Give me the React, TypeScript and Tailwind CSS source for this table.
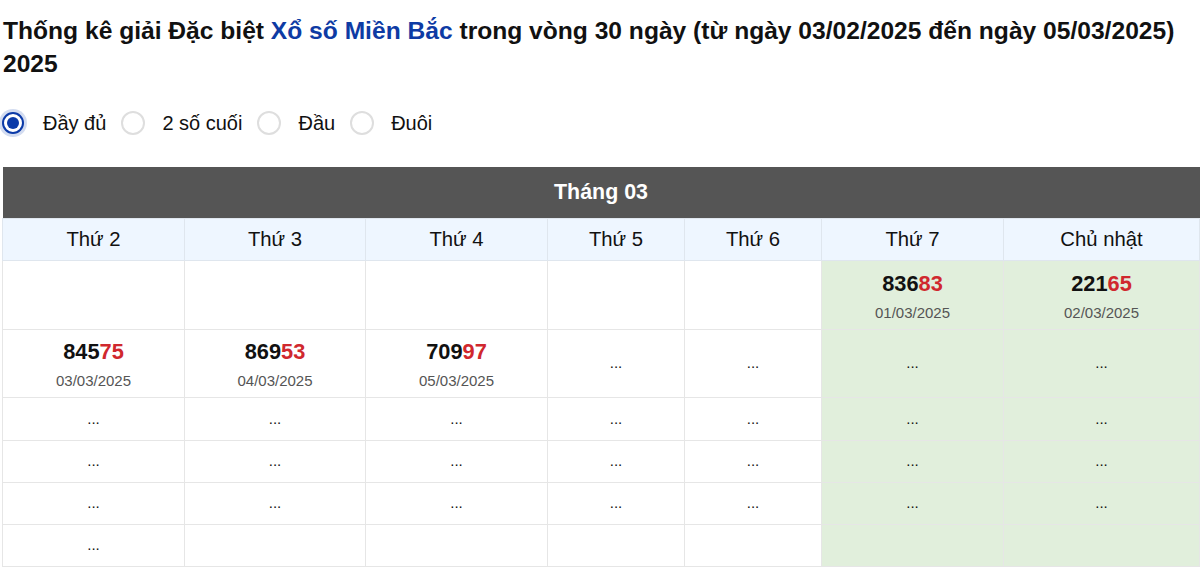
import React from "react";

type Cell = { num?: string; date?: string; dots?: boolean } | null;

const days = ["Thứ 2", "Thứ 3", "Thứ 4", "Thứ 5", "Thứ 6", "Thứ 7", "Chủ nhật"];

const rows: { h: string; cells: Cell[] }[] = [
  {
    h: "h-[69px]",
    cells: [null, null, null, null, null, { num: "83683", date: "01/03/2025" }, { num: "22165", date: "02/03/2025" }],
  },
  {
    h: "h-[68px]",
    cells: [
      { num: "84575", date: "03/03/2025" },
      { num: "86953", date: "04/03/2025" },
      { num: "70997", date: "05/03/2025" },
      { dots: true },
      { dots: true },
      { dots: true },
      { dots: true },
    ],
  },
  { h: "h-[43px]", cells: Array.from({ length: 7 }, () => ({ dots: true })) },
  { h: "h-[42px]", cells: Array.from({ length: 7 }, () => ({ dots: true })) },
  { h: "h-[42px]", cells: Array.from({ length: 7 }, () => ({ dots: true })) },
  { h: "h-[42px]", cells: [{ dots: true }, null, null, null, null, null, null] },
];

function Radio({ checked, label }: { checked?: boolean; label: string }) {
  return (
    <label className="flex items-center">
      {checked ? (
        <span className="flex h-[22px] w-[22px] items-center justify-center rounded-full border-[2px] border-[#0b3aa8] bg-white shadow-[0_0_0_3px_rgba(13,59,171,0.18)]">
          <span className="h-[12px] w-[12px] rounded-full bg-[#0b3aa8]" />
        </span>
      ) : (
        <span className="h-[24px] w-[24px] rounded-full border-[2px] border-[#dedede] bg-white" />
      )}
      <span className={`${checked ? "ml-[19px]" : "ml-[17px]"} text-[20px] leading-[28px] text-[#111]`}>{label}</span>
    </label>
  );
}

export default function App() {
  return (
    <div className="w-[1200px] bg-white pl-[2px] text-black" style={{ fontFamily: '"Liberation Sans", Arial, sans-serif' }}>
      <h1 className="pt-[14px] pl-[1px] pr-[10px] text-[24.6px] font-bold leading-[33px] text-[#111]">
        Thống kê giải Đặc biệt <span className="text-[#0e3ba4]">Xổ số Miền Bắc</span> trong vòng 30 ngày (từ ngày
        03/02/2025 đến ngày 05/03/2025) 2025
      </h1>
      <div className="mt-[29px] flex items-center gap-[15px]">
        <Radio checked label="Đầy đủ" />
        <Radio label="2 số cuối" />
        <Radio label="Đầu" />
        <Radio label="Đuôi" />
      </div>
      <table className="mt-[30px] w-[1198px] table-fixed border-collapse">
        <colgroup>
          <col className="w-[182px]" />
          <col className="w-[181px]" />
          <col className="w-[182px]" />
          <col className="w-[137px]" />
          <col className="w-[137px]" />
          <col className="w-[182px]" />
          <col />
        </colgroup>
        <thead>
          <tr className="h-[51px] bg-[#555555]">
            <th colSpan={7} className="text-center text-[21.4px] font-bold text-white">
              Tháng 03
            </th>
          </tr>
          <tr className="h-[42px] bg-[#eef6ff]">
            {days.map((d) => (
              <th key={d} className="border border-[#dfe6ee] text-center text-[20.3px] font-normal text-[#111]">
                {d}
              </th>
            ))}
          </tr>
        </thead>
        <tbody>
          {rows.map((r, ri) => (
            <tr key={ri} className={r.h}>
              {r.cells.map((c, ci) => (
                <td
                  key={ci}
                  className={`border border-[#e6e6e6] p-0 text-center align-middle ${ci >= 5 ? "bg-[#e1efdc]" : "bg-white"}`}
                >
                  {c && c.num ? (
                    <div className="flex flex-col items-center pt-[4px]">
                      <div className="text-[21.8px] font-bold leading-[24px] text-[#111]">
                        {c.num.slice(0, 3)}
                        <span className="text-[#d0282e]">{c.num.slice(3)}</span>
                      </div>
                      <div className="mt-[8px] text-[15px] leading-[18px] text-[#555]">{c.date}</div>
                    </div>
                  ) : c && c.dots ? (
                    <span className="text-[15px] text-[#111]">...</span>
                  ) : null}
                </td>
              ))}
            </tr>
          ))}
        </tbody>
      </table>
    </div>
  );
}
